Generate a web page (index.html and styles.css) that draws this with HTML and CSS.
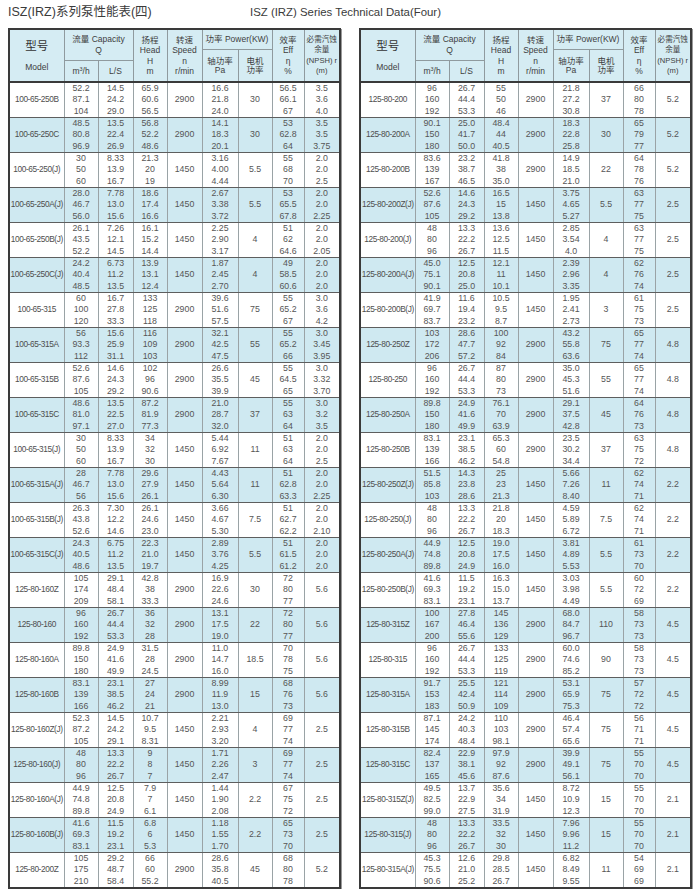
FILE: index.html
```html
<!DOCTYPE html>
<html lang="zh-CN">
<head>
<meta charset="utf-8">
<title>ISZ(IRZ)系列泵性能表(四)</title>
<link rel="stylesheet" href="styles.css">
</head>
<body>
<div class="titles">
  <div class="t1">ISZ(IRZ)系列泵性能表(四)</div>
  <div class="t2">ISZ (IRZ) Series Technical Data(Four)</div>
</div>
<div class="tables">
<table class="spec">
<colgroup><col class="c-model"><col class="c-q"><col class="c-ls"><col class="c-h"><col class="c-n"><col class="c-pa"><col class="c-mp"><col class="c-eff"><col class="c-npsh"></colgroup>
<thead>
<tr class="h1">
<th rowspan="3" class="hm"><span class="zhb">型号</span><span class="enm">Model</span></th>
<th colspan="2" rowspan="2" class="hq">流量 Capacity<br>Q</th>
<th rowspan="3" class="h4">扬程<br>Head<br>H<br>m</th>
<th rowspan="3" class="h4">转速<br>Speed<br>n<br>r/min</th>
<th colspan="2" class="hp">功率 Power(KW)</th>
<th rowspan="3" class="h4">效率<br>Eff<br>η<br>%</th>
<th rowspan="3" class="h4 hn">必需汽蚀<br>余量<br>(NPSH) r<br>(m)</th>
</tr>
<tr class="h2"><th rowspan="2" class="h2l">轴功率<br>Pa</th><th rowspan="2" class="h2l">电机<br>功率</th></tr>
<tr class="h3"><th>m<sup>3</sup>/h</th><th>L/S</th></tr>
</thead>
<tbody>
<tr><td class="m">100-65-250B</td><td>52.2<br>87.1<br>104</td><td>14.5<br>24.2<br>29.0</td><td>65.9<br>60.6<br>56.5</td><td>2900</td><td>16.6<br>21.8<br>24.0</td><td>30</td><td>56.5<br>66.1<br>67</td><td>3.5<br>3.6<br>4.0</td></tr>
<tr class="b"><td class="m">100-65-250C</td><td>48.5<br>80.8<br>96.9</td><td>13.5<br>22.4<br>26.9</td><td>56.8<br>52.2<br>48.6</td><td>2900</td><td>14.1<br>18.3<br>20.1</td><td>30</td><td>53<br>62.8<br>64</td><td>3.5<br>3.5<br>3.75</td></tr>
<tr><td class="m">100-65-250(J)</td><td>30<br>50<br>60</td><td>8.33<br>13.9<br>16.7</td><td>21.3<br>20<br>19</td><td>1450</td><td>3.16<br>4.00<br>4.44</td><td>5.5</td><td>55<br>68<br>70</td><td>2.0<br>2.0<br>2.5</td></tr>
<tr class="b"><td class="m">100-65-250A(J)</td><td>28.0<br>46.7<br>56.0</td><td>7.78<br>13.0<br>15.6</td><td>18.6<br>17.4<br>16.6</td><td>1450</td><td>2.67<br>3.38<br>3.72</td><td>5.5</td><td>53<br>65.5<br>67.8</td><td>2.0<br>2.0<br>2.25</td></tr>
<tr><td class="m">100-65-250B(J)</td><td>26.1<br>43.5<br>52.2</td><td>7.26<br>12.1<br>14.5</td><td>16.1<br>15.2<br>14.4</td><td>1450</td><td>2.25<br>2.90<br>3.17</td><td>4</td><td>51<br>62<br>64.6</td><td>2.0<br>2.0<br>2.05</td></tr>
<tr class="b"><td class="m">100-65-250C(J)</td><td>24.2<br>40.4<br>48.5</td><td>6.73<br>11.2<br>13.5</td><td>13.9<br>13.1<br>12.4</td><td>1450</td><td>1.87<br>2.45<br>2.70</td><td>4</td><td>49<br>58.5<br>60.6</td><td>2.0<br>2.0<br>2.0</td></tr>
<tr><td class="m">100-65-315</td><td>60<br>100<br>120</td><td>16.7<br>27.8<br>33.3</td><td>133<br>125<br>118</td><td>2900</td><td>39.6<br>51.6<br>57.5</td><td>75</td><td>55<br>65.2<br>67</td><td>3.0<br>3.6<br>4.2</td></tr>
<tr class="b"><td class="m">100-65-315A</td><td>56<br>93.3<br>112</td><td>15.6<br>25.9<br>31.1</td><td>116<br>109<br>103</td><td>2900</td><td>32.1<br>42.5<br>47.5</td><td>55</td><td>55<br>65.2<br>66</td><td>3.0<br>3.45<br>3.95</td></tr>
<tr><td class="m">100-65-315B</td><td>52.6<br>87.6<br>105</td><td>14.6<br>24.3<br>29.2</td><td>102<br>96<br>90.6</td><td>2900</td><td>26.6<br>35.5<br>39.9</td><td>45</td><td>55<br>64.5<br>65</td><td>3.0<br>3.32<br>3.70</td></tr>
<tr class="b"><td class="m">100-65-315C</td><td>48.6<br>81.0<br>97.1</td><td>13.5<br>22.5<br>27.0</td><td>87.2<br>81.9<br>77.3</td><td>2900</td><td>21.0<br>28.7<br>32.0</td><td>37</td><td>55<br>63<br>64</td><td>3.0<br>3.2<br>3.5</td></tr>
<tr><td class="m">100-65-315(J)</td><td>30<br>50<br>60</td><td>8.33<br>13.9<br>16.7</td><td>34<br>32<br>30</td><td>1450</td><td>5.44<br>6.92<br>7.67</td><td>11</td><td>51<br>63<br>64</td><td>2.0<br>2.0<br>2.5</td></tr>
<tr class="b"><td class="m">100-65-315A(J)</td><td>28<br>46.7<br>56</td><td>7.78<br>13.0<br>15.6</td><td>29.6<br>27.9<br>26.1</td><td>1450</td><td>4.43<br>5.64<br>6.30</td><td>11</td><td>51<br>62.8<br>63.3</td><td>2.0<br>2.0<br>2.25</td></tr>
<tr><td class="m">100-65-315B(J)</td><td>26.3<br>43.8<br>52.6</td><td>7.30<br>12.2<br>14.6</td><td>26.1<br>24.6<br>23.0</td><td>1450</td><td>3.66<br>4.67<br>5.30</td><td>7.5</td><td>51<br>62.7<br>62.2</td><td>2.0<br>2.0<br>2.10</td></tr>
<tr class="b"><td class="m">100-65-315C(J)</td><td>24.3<br>40.5<br>48.6</td><td>6.75<br>11.2<br>13.5</td><td>22.3<br>21.0<br>19.7</td><td>1450</td><td>2.89<br>3.76<br>4.25</td><td>5.5</td><td>51<br>61.5<br>61.2</td><td>2.0<br>2.0<br>2.0</td></tr>
<tr><td class="m">125-80-160Z</td><td>105<br>174<br>209</td><td>29.1<br>48.4<br>58.1</td><td>42.8<br>38<br>33.3</td><td>2900</td><td>16.9<br>22.6<br>24.6</td><td>30</td><td>72<br>80<br>77</td><td>5.6</td></tr>
<tr class="b"><td class="m">125-80-160</td><td>96<br>160<br>192</td><td>26.7<br>44.4<br>53.3</td><td>36<br>32<br>28</td><td>2900</td><td>13.1<br>17.5<br>19.0</td><td>22</td><td>72<br>80<br>77</td><td>5.6</td></tr>
<tr><td class="m">125-80-160A</td><td>89.8<br>150<br>180</td><td>24.9<br>41.6<br>49.9</td><td>31.5<br>28<br>24.5</td><td>2900</td><td>11.0<br>14.7<br>16.0</td><td>18.5</td><td>70<br>78<br>75</td><td>5.6</td></tr>
<tr class="b"><td class="m">125-80-160B</td><td>83.1<br>139<br>166</td><td>23.1<br>38.5<br>46.2</td><td>27<br>24<br>21</td><td>2900</td><td>8.99<br>11.9<br>13.0</td><td>15</td><td>68<br>76<br>73</td><td>5.6</td></tr>
<tr><td class="m">125-80-160Z(J)</td><td>52.3<br>87.2<br>105</td><td>14.5<br>24.2<br>29.1</td><td>10.7<br>9.5<br>8.31</td><td>1450</td><td>2.21<br>2.93<br>3.20</td><td>4</td><td>69<br>77<br>74</td><td>2.5</td></tr>
<tr class="b"><td class="m">125-80-160(J)</td><td>48<br>80<br>96</td><td>13.3<br>22.2<br>26.7</td><td>9<br>8<br>7</td><td>1450</td><td>1.71<br>2.26<br>2.47</td><td>3</td><td>69<br>77<br>74</td><td>2.5</td></tr>
<tr><td class="m">125-80-160A(J)</td><td>44.9<br>74.8<br>89.8</td><td>12.5<br>20.8<br>24.9</td><td>7.9<br>7<br>6.1</td><td>1450</td><td>1.44<br>1.90<br>2.08</td><td>2.2</td><td>67<br>75<br>72</td><td>2.5</td></tr>
<tr class="b"><td class="m">125-80-160B(J)</td><td>41.6<br>69.3<br>83.1</td><td>11.5<br>19.2<br>23.1</td><td>6.8<br>6<br>5.3</td><td>1450</td><td>1.18<br>1.55<br>1.70</td><td>2.2</td><td>65<br>73<br>70</td><td>2.5</td></tr>
<tr><td class="m">125-80-200Z</td><td>105<br>175<br>210</td><td>29.2<br>48.7<br>58.4</td><td>66<br>60<br>55.2</td><td>2900</td><td>28.6<br>35.8<br>40.5</td><td>45</td><td>68<br>80<br>78</td><td>5.2</td></tr>
</tbody>
</table>

<table class="spec">
<colgroup><col class="c-model"><col class="c-q"><col class="c-ls"><col class="c-h"><col class="c-n"><col class="c-pa"><col class="c-mp"><col class="c-eff"><col class="c-npsh"></colgroup>
<thead>
<tr class="h1">
<th rowspan="3" class="hm"><span class="zhb">型号</span><span class="enm">Model</span></th>
<th colspan="2" rowspan="2" class="hq">流量 Capacity<br>Q</th>
<th rowspan="3" class="h4">扬程<br>Head<br>H<br>m</th>
<th rowspan="3" class="h4">转速<br>Speed<br>n<br>r/min</th>
<th colspan="2" class="hp">功率 Power(KW)</th>
<th rowspan="3" class="h4">效率<br>Eff<br>η<br>%</th>
<th rowspan="3" class="h4 hn">必需汽蚀<br>余量<br>(NPSH) r<br>(m)</th>
</tr>
<tr class="h2"><th rowspan="2" class="h2l">轴功率<br>Pa</th><th rowspan="2" class="h2l">电机<br>功率</th></tr>
<tr class="h3"><th>m<sup>3</sup>/h</th><th>L/S</th></tr>
</thead>
<tbody>
<tr><td class="m">125-80-200</td><td>96<br>160<br>192</td><td>26.7<br>44.4<br>53.3</td><td>55<br>50<br>46</td><td>2900</td><td>21.8<br>27.2<br>30.8</td><td>37</td><td>66<br>80<br>78</td><td>5.2</td></tr>
<tr class="b"><td class="m">125-80-200A</td><td>90.1<br>150<br>180</td><td>25.0<br>41.7<br>50.0</td><td>48.4<br>44<br>40.5</td><td>2900</td><td>18.3<br>22.8<br>25.8</td><td>30</td><td>65<br>79<br>77</td><td>5.2</td></tr>
<tr><td class="m">125-80-200B</td><td>83.6<br>139<br>167</td><td>23.2<br>38.7<br>46.5</td><td>41.8<br>38<br>35.0</td><td>2900</td><td>14.9<br>18.5<br>21.0</td><td>22</td><td>64<br>78<br>76</td><td>5.2</td></tr>
<tr class="b"><td class="m">125-80-200Z(J)</td><td>52.6<br>87.6<br>105</td><td>14.6<br>24.3<br>29.2</td><td>16.5<br>15<br>13.8</td><td>1450</td><td>3.75<br>4.65<br>5.27</td><td>5.5</td><td>63<br>77<br>75</td><td>2.5</td></tr>
<tr><td class="m">125-80-200(J)</td><td>48<br>80<br>96</td><td>13.3<br>22.2<br>26.7</td><td>13.6<br>12.5<br>11.5</td><td>1450</td><td>2.85<br>3.54<br>4.0</td><td>4</td><td>63<br>77<br>75</td><td>2.5</td></tr>
<tr class="b"><td class="m">125-80-200A(J)</td><td>45.0<br>75.1<br>90.1</td><td>12.5<br>20.8<br>25.0</td><td>12.1<br>11<br>10.1</td><td>1450</td><td>2.39<br>2.96<br>3.35</td><td>4</td><td>62<br>76<br>74</td><td>2.5</td></tr>
<tr><td class="m">125-80-200B(J)</td><td>41.9<br>69.7<br>83.7</td><td>11.6<br>19.4<br>23.2</td><td>10.5<br>9.5<br>8.7</td><td>1450</td><td>1.95<br>2.41<br>2.73</td><td>3</td><td>61<br>75<br>73</td><td>2.5</td></tr>
<tr class="b"><td class="m">125-80-250Z</td><td>103<br>172<br>206</td><td>28.6<br>47.7<br>57.2</td><td>100<br>92<br>84</td><td>2900</td><td>43.2<br>55.8<br>63.6</td><td>75</td><td>65<br>77<br>74</td><td>4.8</td></tr>
<tr><td class="m">125-80-250</td><td>96<br>160<br>192</td><td>26.7<br>44.4<br>53.3</td><td>87<br>80<br>73</td><td>2900</td><td>35.0<br>45.3<br>51.6</td><td>55</td><td>65<br>77<br>74</td><td>4.8</td></tr>
<tr class="b"><td class="m">125-80-250A</td><td>89.8<br>150<br>180</td><td>24.9<br>41.6<br>49.9</td><td>76.1<br>70<br>63.9</td><td>2900</td><td>29.1<br>37.5<br>42.8</td><td>45</td><td>64<br>76<br>73</td><td>4.8</td></tr>
<tr><td class="m">125-80-250B</td><td>83.1<br>139<br>166</td><td>23.1<br>38.5<br>46.2</td><td>65.3<br>60<br>54.8</td><td>2900</td><td>23.5<br>30.2<br>34.4</td><td>37</td><td>63<br>75<br>72</td><td>4.8</td></tr>
<tr class="b"><td class="m">125-80-250Z(J)</td><td>51.5<br>85.8<br>103</td><td>14.3<br>23.8<br>28.6</td><td>25<br>23<br>21.3</td><td>1450</td><td>5.66<br>7.26<br>8.40</td><td>11</td><td>62<br>74<br>71</td><td>2.2</td></tr>
<tr><td class="m">125-80-250(J)</td><td>48<br>80<br>96</td><td>13.3<br>22.2<br>26.7</td><td>21.8<br>20<br>18.3</td><td>1450</td><td>4.59<br>5.89<br>6.72</td><td>7.5</td><td>62<br>74<br>71</td><td>2.2</td></tr>
<tr class="b"><td class="m">125-80-250A(J)</td><td>44.9<br>74.8<br>89.8</td><td>12.5<br>20.8<br>24.9</td><td>19.0<br>17.5<br>16.0</td><td>1450</td><td>3.81<br>4.89<br>5.53</td><td>5.5</td><td>61<br>73<br>70</td><td>2.2</td></tr>
<tr><td class="m">125-80-250B(J)</td><td>41.6<br>69.3<br>83.1</td><td>11.5<br>19.2<br>23.1</td><td>16.3<br>15.0<br>13.7</td><td>1450</td><td>3.03<br>3.98<br>4.49</td><td>5.5</td><td>60<br>72<br>69</td><td>2.2</td></tr>
<tr class="b"><td class="m">125-80-315Z</td><td>100<br>167<br>200</td><td>27.8<br>46.4<br>55.6</td><td>145<br>136<br>129</td><td>2900</td><td>68.0<br>84.7<br>96.7</td><td>110</td><td>58<br>73<br>73</td><td>4.5</td></tr>
<tr><td class="m">125-80-315</td><td>96<br>160<br>192</td><td>26.7<br>44.4<br>53.3</td><td>133<br>125<br>119</td><td>2900</td><td>60.0<br>74.6<br>85.2</td><td>90</td><td>58<br>73<br>73</td><td>4.5</td></tr>
<tr class="b"><td class="m">125-80-315A</td><td>91.7<br>153<br>183</td><td>25.5<br>42.4<br>50.9</td><td>121<br>114<br>109</td><td>2900</td><td>53.1<br>65.9<br>75.3</td><td>75</td><td>57<br>72<br>72</td><td>4.5</td></tr>
<tr><td class="m">125-80-315B</td><td>87.1<br>145<br>174</td><td>24.2<br>40.3<br>48.4</td><td>110<br>103<br>98.1</td><td>2900</td><td>46.4<br>57.4<br>65.6</td><td>75</td><td>56<br>71<br>71</td><td>4.5</td></tr>
<tr class="b"><td class="m">125-80-315C</td><td>82.4<br>137<br>165</td><td>22.9<br>38.1<br>45.6</td><td>97.9<br>92<br>87.6</td><td>2900</td><td>39.9<br>49.1<br>56.1</td><td>75</td><td>55<br>70<br>70</td><td>4.5</td></tr>
<tr><td class="m">125-80-315Z(J)</td><td>49.5<br>82.5<br>99.0</td><td>13.7<br>22.9<br>27.5</td><td>35.6<br>34<br>31.9</td><td>1450</td><td>8.72<br>10.9<br>12.3</td><td>15</td><td>55<br>70<br>70</td><td>2.1</td></tr>
<tr class="b"><td class="m">125-80-315(J)</td><td>48<br>80<br>96</td><td>13.3<br>22.2<br>26.7</td><td>33.5<br>32<br>30</td><td>1450</td><td>7.96<br>9.96<br>11.2</td><td>15</td><td>55<br>70<br>70</td><td>2.1</td></tr>
<tr><td class="m">125-80-315A(J)</td><td>45.3<br>75.5<br>90.6</td><td>12.6<br>21.0<br>25.2</td><td>29.8<br>28.5<br>26.7</td><td>1450</td><td>6.82<br>8.49<br>9.55</td><td>11</td><td>54<br>69<br>69</td><td>2.1</td></tr>
</tbody>
</table>
</div>
</body>
</html>
```

FILE: styles.css
```css
html, body {
  margin: 0;
  padding: 0;
  background: #ffffff;
}

body {
  font-family: "Liberation Sans", Arial, "Noto Sans CJK SC", sans-serif;
  color: #555555;
  width: 700px;
}

.titles {
  display: flex;
  align-items: center;
  padding: 4px 0 0 8px;
  height: 16px;
  color: #3a3a3a;
}

.t1 {
  flex: 0 0 242px;
  font-size: 12.5px;
  line-height: 16px;
  white-space: nowrap;
}

.t2 {
  font-size: 11.4px;
  line-height: 16px;
  white-space: nowrap;
}

.tables {
  display: flex;
  gap: 18px;
  margin-top: 8px;
  padding-left: 8px;
}

.spec {
  border-collapse: collapse;
  table-layout: fixed;
  width: 332px;
  border: 2px solid #3a3a3a;
  box-shadow: 1px 1px 0 #9a9a9a;
}

.c-model { width: 55px; }
.c-q { width: 34px; }
.c-ls { width: 35px; }
.c-h { width: 34px; }
.c-n { width: 35px; }
.c-pa { width: 36px; }
.c-mp { width: 34px; }
.c-eff { width: 32px; }
.c-npsh { width: 36px; }

.spec th {
  background: #d5ecf3;
  color: #3e3e3e;
  font-weight: normal;
  font-size: 8.5px;
  line-height: 10.5px;
  padding: 0;
  text-align: center;
  vertical-align: middle;
  border: 1px solid #8f9a9e;
  white-space: nowrap;
}

.spec tr.h1 { height: 20px; }
.spec tr.h2 { height: 11px; }
.spec tr.h3 { height: 22px; }

.zhb {
  display: block;
  font-size: 11.5px;
  line-height: 14px;
  color: #333333;
}

.enm {
  display: block;
  margin-top: 9px;
  font-size: 8.5px;
  line-height: 11px;
}

.spec th.hq {
  line-height: 11px;
}

.spec th.hp {
  line-height: 11px;
}

.spec th.h2l {
  line-height: 9.5px;
  padding-top: 2px;
}

.spec th.hn {
  font-size: 7.6px;
}

.spec th sup {
  font-size: 5.5px;
  line-height: 0;
  vertical-align: 3px;
}

.spec td {
  padding: 0;
  height: 34px;
  font-size: 8.8px;
  line-height: 11.3px;
  text-align: center;
  vertical-align: middle;
  color: #565656;
  border-left: 1px solid #9aa3a6;
  border-right: 1px solid #9aa3a6;
  border-top: 1px solid #5e5e5e;
  border-bottom: 1px solid #5e5e5e;
  white-space: nowrap;
}

.spec tbody tr:first-child td {
  border-top: 2px solid #3a3a3a;
}

.spec td.m {
  font-size: 8.3px;
  letter-spacing: -0.4px;
  color: #4e4e4e;
}

.spec tr.b td {
  background: #cfe9f1;
}
```
